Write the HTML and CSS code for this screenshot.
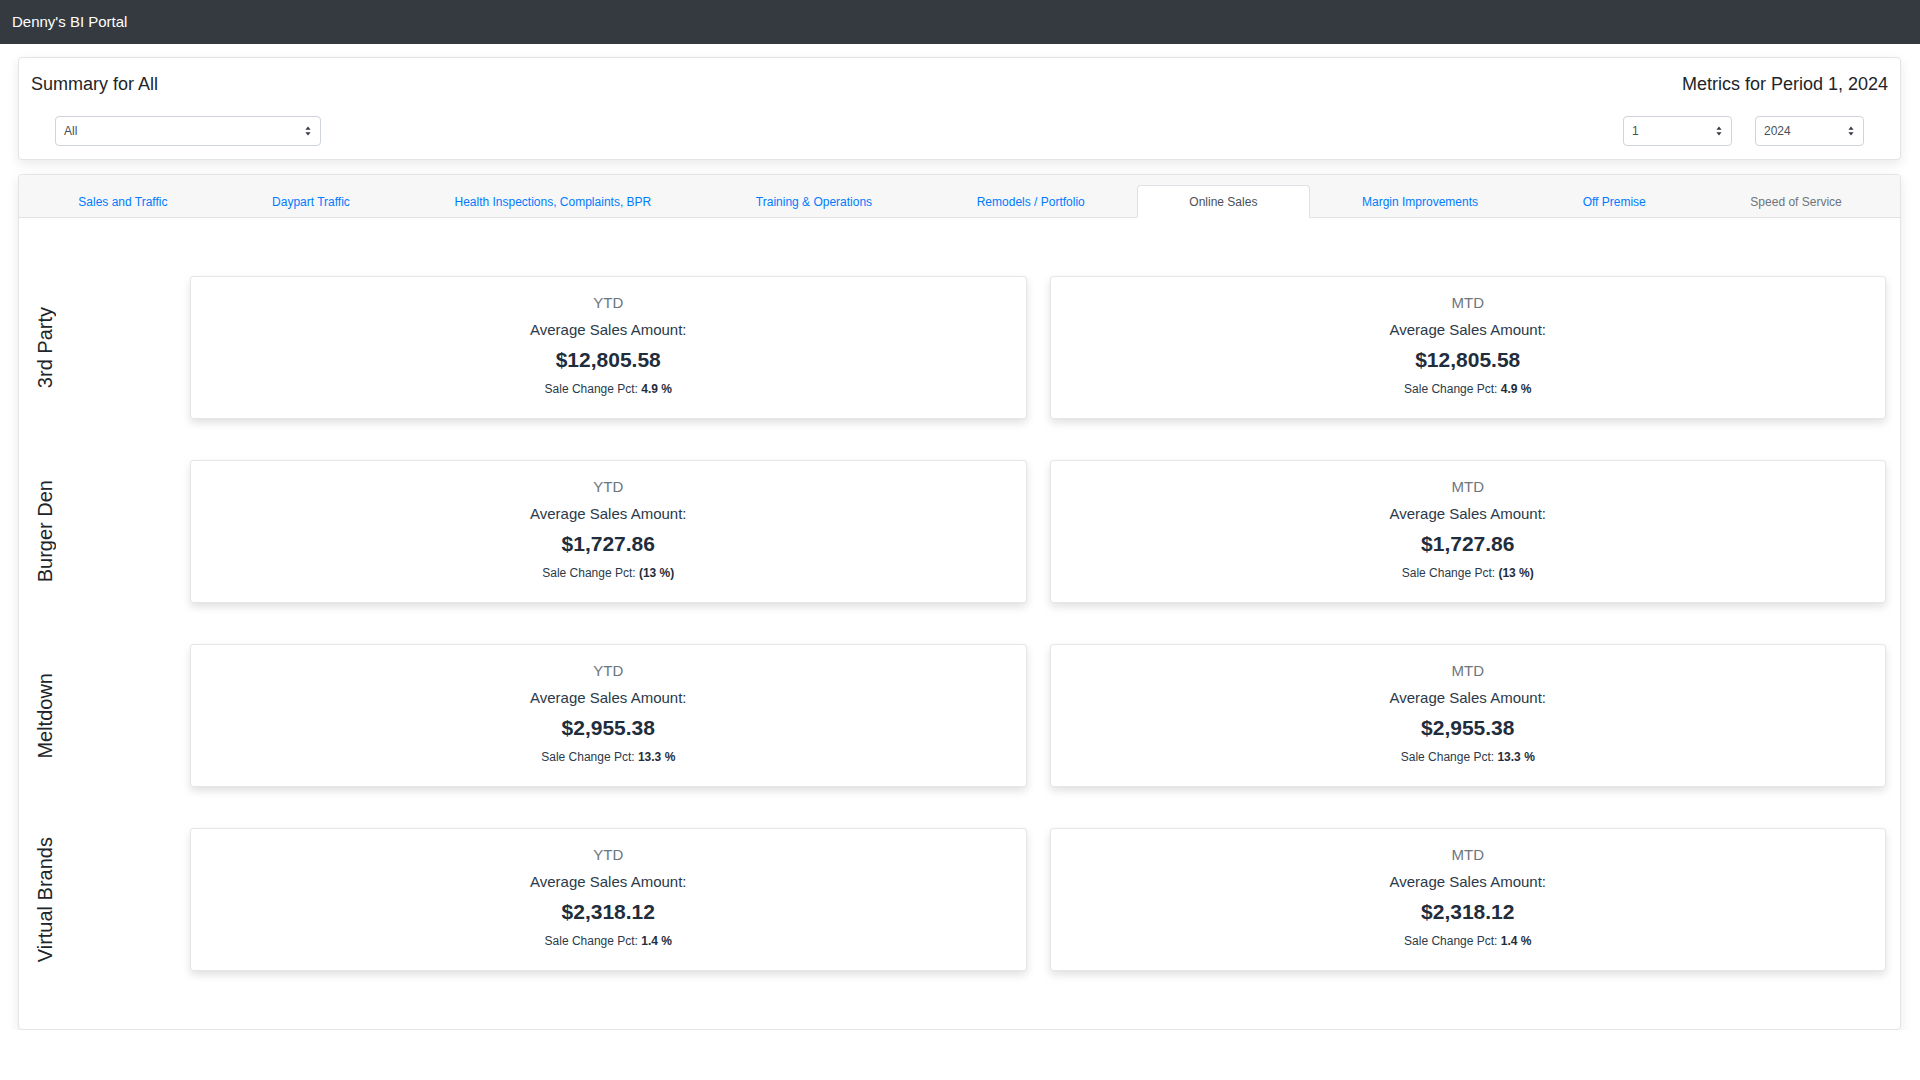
FILE: index.html
```html
<!DOCTYPE html>
<html lang="en">
<head>
<meta charset="utf-8">
<title>Denny's BI Portal</title>
<link rel="stylesheet" href="styles.css">
</head>
<body>
<header class="navbar">Denny's BI Portal</header>
<main class="main">
  <section class="card summary">
    <div class="summary-head">
      <h1 class="title">Summary for All</h1>
      <h2 class="title">Metrics for Period 1, 2024</h2>
    </div>
    <div class="summary-controls">
      <div class="select-wrap wide">
        <select class="select"><option>All</option></select>
        <svg class="caret" viewBox="0 0 6 10" width="6" height="10"><path d="M3 0.5 L5.6 3.8 H0.4 Z M3 9.5 L5.6 6.2 H0.4 Z" fill="#343a40"/></svg>
      </div>
      <div class="right-selects">
        <div class="select-wrap narrow">
          <select class="select"><option>1</option></select>
          <svg class="caret" viewBox="0 0 6 10" width="6" height="10"><path d="M3 0.5 L5.6 3.8 H0.4 Z M3 9.5 L5.6 6.2 H0.4 Z" fill="#343a40"/></svg>
        </div>
        <div class="select-wrap narrow">
          <select class="select"><option>2024</option></select>
          <svg class="caret" viewBox="0 0 6 10" width="6" height="10"><path d="M3 0.5 L5.6 3.8 H0.4 Z M3 9.5 L5.6 6.2 H0.4 Z" fill="#343a40"/></svg>
        </div>
      </div>
    </div>
  </section>

  <section class="card tabs-card">
    <nav class="tabs">
      <a class="tab">Sales and Traffic</a>
      <a class="tab">Daypart Traffic</a>
      <a class="tab">Health Inspections, Complaints, BPR</a>
      <a class="tab">Training &amp; Operations</a>
      <a class="tab">Remodels / Portfolio</a>
      <a class="tab active">Online Sales</a>
      <a class="tab">Margin Improvements</a>
      <a class="tab">Off Premise</a>
      <a class="tab disabled">Speed of Service</a>
    </nav>
    <div class="grid">
      <div class="label"><span>3rd Party</span></div>
      <div class="metric"><div class="period">YTD</div><div class="caption">Average Sales Amount:</div><div class="amount">$12,805.58</div><div class="pct">Sale Change Pct: <b>4.9 %</b></div></div>
      <div class="metric"><div class="period">MTD</div><div class="caption">Average Sales Amount:</div><div class="amount">$12,805.58</div><div class="pct">Sale Change Pct: <b>4.9 %</b></div></div>

      <div class="label"><span>Burger Den</span></div>
      <div class="metric"><div class="period">YTD</div><div class="caption">Average Sales Amount:</div><div class="amount">$1,727.86</div><div class="pct">Sale Change Pct: <b>(13 %)</b></div></div>
      <div class="metric"><div class="period">MTD</div><div class="caption">Average Sales Amount:</div><div class="amount">$1,727.86</div><div class="pct">Sale Change Pct: <b>(13 %)</b></div></div>

      <div class="label"><span>Meltdown</span></div>
      <div class="metric"><div class="period">YTD</div><div class="caption">Average Sales Amount:</div><div class="amount">$2,955.38</div><div class="pct">Sale Change Pct: <b>13.3 %</b></div></div>
      <div class="metric"><div class="period">MTD</div><div class="caption">Average Sales Amount:</div><div class="amount">$2,955.38</div><div class="pct">Sale Change Pct: <b>13.3 %</b></div></div>

      <div class="label"><span>Virtual Brands</span></div>
      <div class="metric"><div class="period">YTD</div><div class="caption">Average Sales Amount:</div><div class="amount">$2,318.12</div><div class="pct">Sale Change Pct: <b>1.4 %</b></div></div>
      <div class="metric"><div class="period">MTD</div><div class="caption">Average Sales Amount:</div><div class="amount">$2,318.12</div><div class="pct">Sale Change Pct: <b>1.4 %</b></div></div>
    </div>
  </section>
</main>
</body>
</html>
```

FILE: styles.css
```css
* { box-sizing: border-box; }
html, body { margin: 0; padding: 0; background: #fff; }
body {
  font-family: "Liberation Sans", Arial, Helvetica, sans-serif;
  color: #212529;
}

.navbar {
  height: 44px;
  background: #343a40;
  color: #fff;
  font-size: 15px;
  display: flex;
  align-items: center;
  padding-left: 12px;
  padding-bottom: 2px;
}

.main {
  padding: 13px 19px 0 18px;
}

.card {
  background: #fff;
  border: 1px solid #e4e4e4;
  border-radius: 4px;
  box-shadow: 0 4px 12px rgba(0, 0, 0, 0.09);
}

.summary {
  height: 103px;
  padding: 15px 12px 0 12px;
}
.summary-head {
  display: flex;
  justify-content: space-between;
  align-items: flex-start;
}
.title {
  margin: 0;
  font-size: 18px;
  font-weight: 400;
  line-height: 22px;
  color: #212529;
}
.summary-controls {
  display: flex;
  justify-content: space-between;
  margin-top: 21px;
  padding: 0 24px;
}
.right-selects {
  display: flex;
  gap: 23px;
}
.select-wrap {
  position: relative;
  height: 30px;
}
.select-wrap.wide { width: 266px; }
.select-wrap.narrow { width: 109px; }
.select {
  appearance: none;
  -webkit-appearance: none;
  width: 100%;
  height: 30px;
  border: 1px solid #ced4da;
  border-radius: 4px;
  background: #fff;
  font-family: "Liberation Sans", Arial, sans-serif;
  font-size: 12px;
  color: #495057;
  padding: 0 20px 0 8px;
  outline: none;
}
.caret {
  position: absolute;
  right: 10px;
  top: 10px;
  pointer-events: none;
}

.tabs-card {
  margin-top: 14px;
  height: 856px;
}
.tabs {
  display: flex;
  background: #f7f7f7;
  padding: 10px 6px 0 7px;
  border-bottom: 1px solid #e2e2e2;
  border-radius: 4px 4px 0 0;
}
.tab {
  flex: 1 1 auto;
  height: 33px;
  display: flex;
  align-items: center;
  justify-content: center;
  font-size: 12px;
  color: #007bff;
  white-space: nowrap;
  border: 1px solid transparent;
  border-radius: 4px 4px 0 0;
  margin-bottom: -1px;
}
.tab.active {
  background: #fff;
  color: #495057;
  border-color: #dee2e6 #dee2e6 #fff;
}
.tab.disabled {
  color: #6c757d;
}

.grid {
  display: grid;
  grid-template-columns: 148px 1fr 1fr;
  grid-auto-rows: 143px;
  column-gap: 23px;
  row-gap: 41px;
  padding: 58px 14px 0 0;
}
.label {
  display: flex;
  align-items: center;
  padding-left: 15px;
}
.label span {
  writing-mode: vertical-rl;
  transform: rotate(180deg);
  font-size: 20px;
  line-height: 22px;
  color: #212529;
  white-space: nowrap;
}
.metric {
  border: 1px solid #e6e6e6;
  border-radius: 3px;
  box-shadow: 0 4px 8px rgba(0, 0, 0, 0.12);
  background: #fff;
  text-align: center;
  padding-top: 17px;
}
.period {
  font-size: 15px;
  line-height: 18px;
  color: #6c757d;
}
.caption {
  margin-top: 9px;
  font-size: 15px;
  line-height: 18px;
  color: #2b3a4a;
}
.amount {
  margin-top: 8px;
  font-size: 21px;
  line-height: 26px;
  font-weight: 700;
  color: #1f2d3d;
}
.pct {
  margin-top: 9px;
  font-size: 12px;
  line-height: 15px;
  color: #2b3a4a;
}
.pct b {
  font-weight: 700;
  color: #1f2d3d;
}
```
